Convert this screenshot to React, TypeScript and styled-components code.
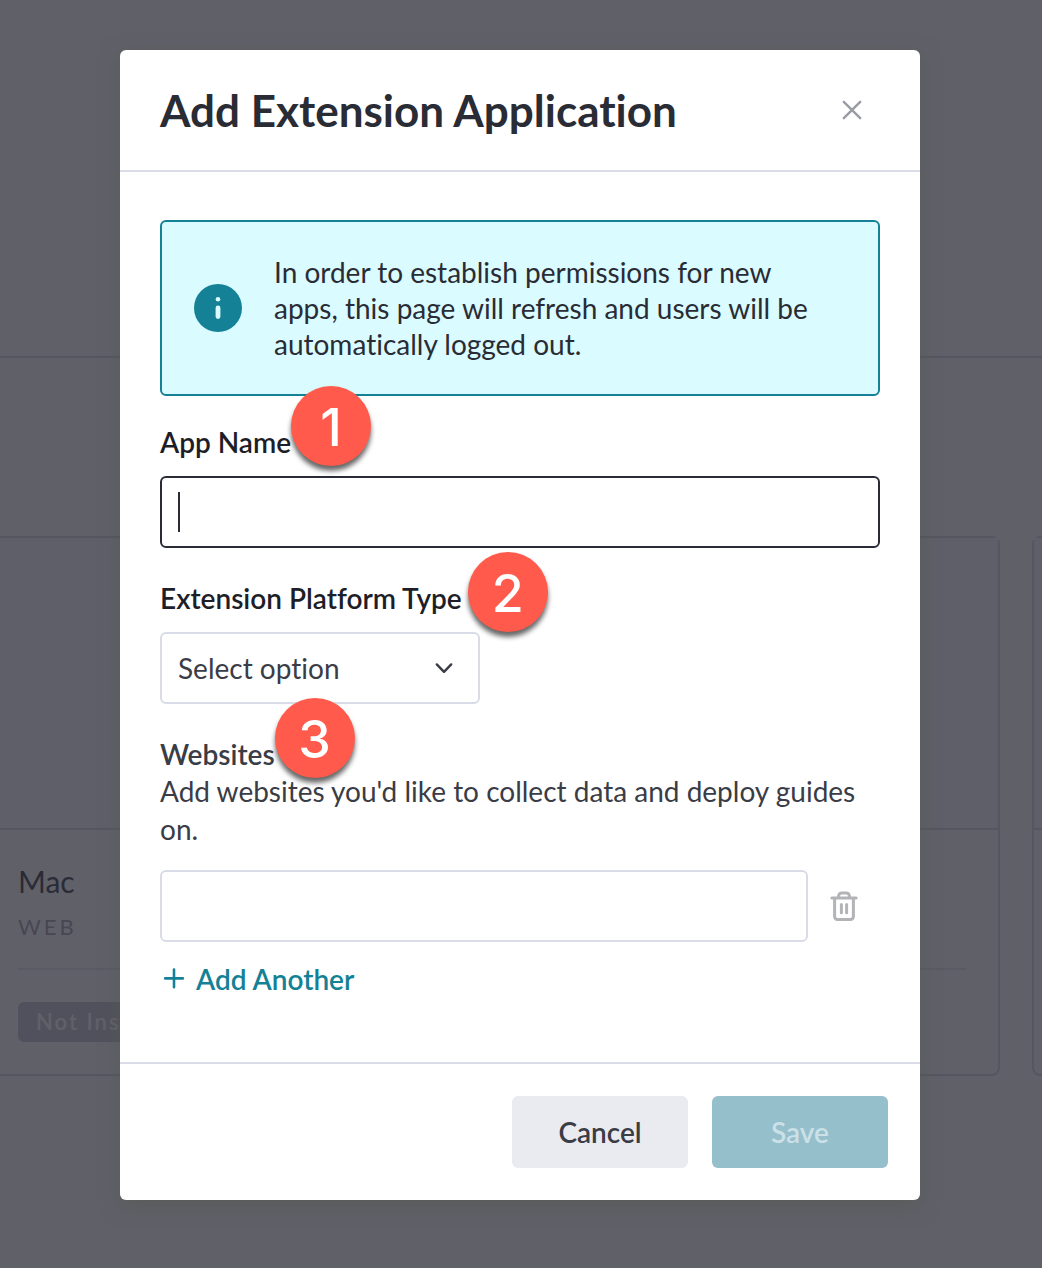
import React, { useState } from "react";
import styled, { createGlobalStyle } from "styled-components";

const color = {
  ink: "#2a2c35",
  label: "#1d1e27",
  text: "#3a3c46",
  line: "#d9dbe6",
  teal: "#148196",
  marker: "#ff5a4b",
};

const GlobalStyle = createGlobalStyle`
  *, *::before, *::after { box-sizing: border-box; }
  body { margin: 0; background: #ffffff; }
  body, button, input, select {
    font-family: Lato, "Liberation Sans", sans-serif;
    font-size: 28px;
    font-variant-ligatures: none;
  }
  h1, h2, p { margin: 0; }
`;

/* Page behind the dialog */

const Page = styled.div`
  position: relative;
  min-height: 100vh;
  overflow: hidden;
`;

const PageHeader = styled.header`
  height: 358px;
  border-bottom: 2px solid #d4d6e0;
`;

const AppList = styled.main`
  display: grid;
  grid-template-columns: 1000px 1000px;
  gap: 32px;
  padding-top: 178px;
`;

const AppCard = styled.article<{ $bleed?: boolean }>`
  display: flex;
  flex-direction: column;
  height: 540px;
  margin-left: ${(p) => (p.$bleed ? "-16px" : "0")};
  border: 2px solid #d4d6e0;
  border-radius: 8px;
`;

const CardPreview = styled.div`
  height: 292px;
  background: #fafafd;
  border-bottom: 2px solid #d4d6e0;
`;

const CardBody = styled.div`
  padding: 32px;
`;

const CardTitle = styled.h2`
  font-size: 30px;
  line-height: 38px;
  font-weight: 400;
  color: ${color.ink};
`;

const CardKind = styled.p`
  padding: 12px 0 26px;
  border-bottom: 2px solid #e6e7ee;
  font-size: 22px;
  line-height: 30px;
  letter-spacing: 3px;
  color: #9a9ca6;
`;

const CardStatus = styled.span`
  display: inline-block;
  margin-top: 32px;
  padding: 0 18px;
  border-radius: 6px;
  background: #c2c3cd;
  font-size: 22px;
  line-height: 40px;
  font-weight: 600;
  letter-spacing: 2px;
  color: #ffffff;
`;

/* Dialog */

const Overlay = styled.div`
  position: absolute;
  inset: 0;
  display: flex;
  align-items: flex-start;
  justify-content: center;
  padding: 50px 122px 68px 120px;
  background: rgba(43, 43, 55, 0.75);
`;

const Dialog = styled.form`
  width: 100%;
  max-width: 800px;
  border-radius: 6px;
  background: #ffffff;
  box-shadow: 0 6px 20px rgba(86, 90, 80, 0.65);
`;

const DialogHeader = styled.header`
  display: flex;
  align-items: center;
  justify-content: space-between;
  padding: 32px 40px;
  border-bottom: 2px solid ${color.line};
`;

const DialogTitle = styled.h1`
  font-size: 44px;
  line-height: 56px;
  font-weight: 700;
  color: ${color.ink};
`;

const IconButton = styled.button<{ $wide?: boolean }>`
  display: flex;
  align-items: center;
  justify-content: center;
  width: ${(p) => (p.$wide ? "72px" : "56px")};
  height: 56px;
  padding: 0;
  border: 0;
  background: none;
  cursor: pointer;
`;

const DialogBody = styled.div`
  padding: 48px 40px 64px;
`;

const Notice = styled.div`
  display: flex;
  align-items: center;
  gap: 32px;
  margin-bottom: 28px;
  padding: 32px 48px 32px 32px;
  border: 2px solid ${color.teal};
  border-radius: 6px;
  background: #dafbff;
`;

const NoticeIcon = styled.svg`
  flex: none;
`;

const NoticeText = styled.p`
  line-height: 36px;
  color: ${color.ink};
`;

const Field = styled.div`
  margin-bottom: 32px;
`;

const LabelRow = styled.div`
  position: relative;
  display: flex;
  width: fit-content;
  line-height: 36px;
`;

const Label = styled.label`
  font-weight: 600;
  color: ${color.label};
`;

const GroupLabel = styled.h2`
  font-size: 28px;
  font-weight: 600;
  color: ${color.text};
`;

const Marker = styled.span<{ $gap?: number; $rise: number }>`
  position: absolute;
  z-index: 1;
  left: calc(100% + ${(p) => p.$gap ?? 0}px);
  top: -${(p) => p.$rise}px;
  width: 80px;
  height: 80px;
  border-radius: 50%;
  background: ${color.marker};
  box-shadow: 0 5px 5px rgba(0, 0, 0, 0.6);
  font-family: Inter, "Liberation Sans", sans-serif;
  font-size: 52px;
  line-height: 84px;
  font-weight: 500;
  text-align: center;
  color: #ffffff;
`;

const InputFrame = styled.div`
  position: relative;
  flex: 1;
`;

const TextInput = styled.input<{ $active?: boolean }>`
  display: block;
  width: 100%;
  height: 72px;
  padding: 0 16px;
  border: 2px solid ${(p) => (p.$active ? color.ink : color.line)};
  border-radius: 6px;
  outline: none;
  background: #ffffff;
  color: ${color.text};
  caret-color: transparent;
`;

const Caret = styled.span`
  position: absolute;
  left: 18px;
  top: 16px;
  width: 2px;
  height: 40px;
  background: ${color.ink};
`;

const SelectFrame = styled.div`
  position: relative;
  width: 320px;
  max-width: 100%;
`;

const Select = styled.select`
  display: block;
  width: 100%;
  height: 72px;
  padding: 0 56px 0 16px;
  border: 2px solid ${color.line};
  border-radius: 6px;
  outline: none;
  appearance: none;
  background: #ffffff;
  color: ${color.text};
`;

const SelectArrow = styled.svg`
  position: absolute;
  right: 24px;
  top: 24px;
  pointer-events: none;
`;

const ControlGap = styled.div`
  margin-top: 16px;
`;

const Help = styled.p`
  margin-bottom: 22px;
  line-height: 38px;
  color: ${color.text};
`;

const SiteRow = styled.div`
  display: flex;
  align-items: center;
`;

const AddButton = styled.button`
  display: flex;
  align-items: center;
  gap: 8px;
  margin-top: 18px;
  padding: 0;
  border: 0;
  background: none;
  line-height: 38px;
  font-weight: 600;
  color: ${color.teal};
  cursor: pointer;
`;

const DialogFooter = styled.footer`
  display: flex;
  justify-content: flex-end;
  gap: 24px;
  padding: 32px;
  border-top: 2px solid ${color.line};
`;

const Button = styled.button<{ $primary?: boolean }>`
  width: 176px;
  height: 72px;
  padding: 0;
  border: 0;
  border-radius: 6px;
  background: ${(p) => (p.$primary ? "#95bfcb" : "#eaebf0")};
  font-weight: 600;
  color: ${(p) => (p.$primary ? "#cbe0e7" : color.text)};
`;

export default function App() {
  const [name, setName] = useState("");
  const [site, setSite] = useState("");

  return (
    <>
      <GlobalStyle />
      <Page>
        <PageHeader />
        <AppList>
          <AppCard $bleed>
            <CardPreview />
            <CardBody>
              <CardTitle>Mac</CardTitle>
              <CardKind>WEB</CardKind>
              <CardStatus>Not Installed</CardStatus>
            </CardBody>
          </AppCard>
          <AppCard>
            <CardPreview />
          </AppCard>
        </AppList>

        <Overlay>
          <Dialog
            role="dialog"
            aria-labelledby="dialog-title"
            onSubmit={(e) => e.preventDefault()}
          >
            <DialogHeader>
              <DialogTitle id="dialog-title">Add Extension Application</DialogTitle>
              <IconButton type="button" aria-label="Close">
                <svg width="24" height="24" viewBox="0 0 24 24" fill="none" stroke="#9a9ca5" strokeWidth="2.4" strokeLinecap="round">
                  <path d="M3.8 3.8l16.4 16.4M20.2 3.8L3.8 20.2" />
                </svg>
              </IconButton>
            </DialogHeader>

            <DialogBody>
              <Notice>
                <NoticeIcon width="48" height="48" viewBox="0 0 48 48" aria-hidden="true">
                  <circle cx="24" cy="24" r="24" fill={color.teal} />
                  <circle cx="24" cy="15.2" r="2.3" fill="#dafbff" />
                  <rect x="21.6" y="21.6" width="4.8" height="13.4" rx="2.4" fill="#dafbff" />
                </NoticeIcon>
                <NoticeText>
                  In order to establish permissions for new apps, this page will refresh and users
                  will be automatically logged out.
                </NoticeText>
              </Notice>

              <Field>
                <LabelRow>
                  <Label htmlFor="app-name">App Name</Label>
                  <Marker $rise={38}>1</Marker>
                </LabelRow>
                <ControlGap>
                  <InputFrame>
                    <TextInput
                      id="app-name"
                      $active
                      value={name}
                      onChange={(e) => setName(e.target.value)}
                    />
                    {name === "" && <Caret />}
                  </InputFrame>
                </ControlGap>
              </Field>

              <Field>
                <LabelRow>
                  <Label htmlFor="platform">Extension Platform Type</Label>
                  <Marker $gap={6} $rise={28}>2</Marker>
                </LabelRow>
                <ControlGap>
                  <SelectFrame>
                    <Select id="platform" defaultValue="">
                      <option value="">Select option</option>
                    </Select>
                    <SelectArrow width="24" height="24" viewBox="0 0 24 24" fill="none" stroke={color.text} strokeWidth="2.4" strokeLinecap="round" strokeLinejoin="round">
                      <path d="M4.8 8.4l7.2 7.4 7.2-7.4" />
                    </SelectArrow>
                  </SelectFrame>
                </ControlGap>
              </Field>

              <LabelRow>
                <GroupLabel id="websites">Websites</GroupLabel>
                <Marker $rise={38}>3</Marker>
              </LabelRow>
              <Help>Add websites you'd like to collect data and deploy guides on.</Help>
              <SiteRow>
                <InputFrame>
                  <TextInput
                    aria-labelledby="websites"
                    value={site}
                    onChange={(e) => setSite(e.target.value)}
                  />
                </InputFrame>
                <IconButton $wide type="button" aria-label="Remove website">
                  <svg width="32" height="32" viewBox="0 0 32 32" fill="none" stroke="#b3b4b8" strokeWidth="3" strokeLinecap="round" strokeLinejoin="round">
                    <path d="M3.8 8h24.4" />
                    <path d="M10.6 7.4V6a3 3 0 0 1 3-3h4.8a3 3 0 0 1 3 3v1.4" />
                    <path d="M6.6 8.6v18a2.8 2.8 0 0 0 2.8 2.8h13.2a2.8 2.8 0 0 0 2.8-2.8v-18" />
                    <path d="M13.4 14.4v8.4M18.6 14.4v8.4" />
                  </svg>
                </IconButton>
              </SiteRow>
              <AddButton type="button">
                <svg width="28" height="28" viewBox="0 0 28 28" fill="none" stroke={color.teal} strokeWidth="2.6" strokeLinecap="round">
                  <path d="M14 4.6v17.6M5.2 13.4h17.6" />
                </svg>
                Add Another
              </AddButton>
            </DialogBody>

            <DialogFooter>
              <Button type="button">Cancel</Button>
              <Button type="submit" $primary disabled>
                Save
              </Button>
            </DialogFooter>
          </Dialog>
        </Overlay>
      </Page>
    </>
  );
}
